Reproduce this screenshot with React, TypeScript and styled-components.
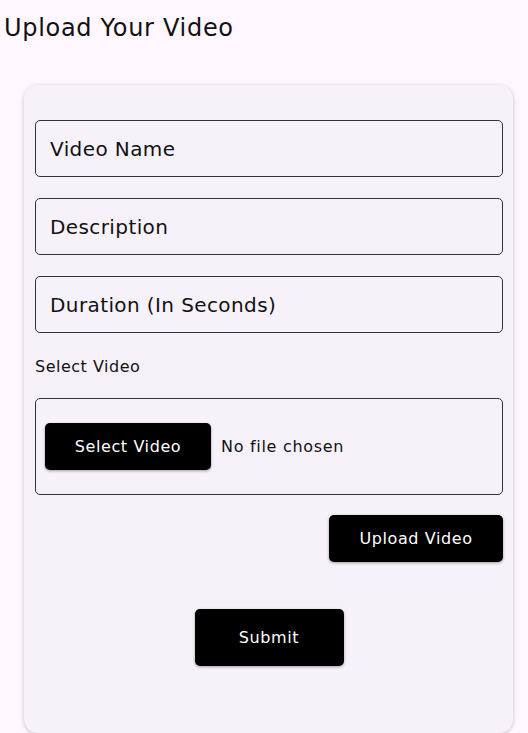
import React from "react";
import styled, { createGlobalStyle } from "styled-components";

const Global = createGlobalStyle`
  html, body { margin: 0; padding: 0; background: #fef7ff; }
  body { font-family: "DejaVu Sans", "Open Sans", sans-serif; color: #111; }
  * { box-sizing: border-box; }
`;

const Page = styled.div`
  width: 528px;
  min-height: 733px;
  display: flex;
  flex-direction: column;
  overflow: hidden;
`;

const Title = styled.h1`
  margin: 0;
  padding: 13px 4px 0;
  font-size: 24px;
  line-height: 30px;
  font-weight: 400;
  letter-spacing: 0.7px;
  color: #111;
`;

const Card = styled.div`
  margin: 42px 15px 0 24px;
  height: 648px;
  background: #f7f2fa;
  border-radius: 14px;
  box-shadow: 0 1px 4px rgba(0, 0, 0, 0.22);
  padding: 35px 10px 0 11px;
  display: flex;
  flex-direction: column;
`;

const Field = styled.div`
  height: 57px;
  border: 1px solid #333;
  border-radius: 5px;
  display: flex;
  align-items: center;
  padding: 0 14px;
  font-size: 20px;
  letter-spacing: 0.4px;
  color: #111;
  & + & { margin-top: 21px; }
`;

const Label = styled.div`
  margin-top: 22px;
  height: 22px;
  display: flex;
  align-items: center;
  font-size: 16px;
  letter-spacing: 0.5px;
  color: #111;
`;

const FileBox = styled.div`
  margin-top: 21px;
  height: 97px;
  border: 1px solid #333;
  border-radius: 5px;
  display: flex;
  align-items: center;
  padding: 0 9px;
  gap: 10px;
`;

const DarkButton = styled.button<{ $w: number; $h: number }>`
  width: ${(p) => p.$w}px;
  height: ${(p) => p.$h}px;
  background: #000;
  color: #fff;
  border: none;
  border-radius: 5px;
  font-family: inherit;
  font-size: 16px;
  letter-spacing: 0.6px;
  box-shadow: 0 1px 3px rgba(0, 0, 0, 0.35);
  display: flex;
  align-items: center;
  justify-content: center;
  padding: 0;
`;

const FileText = styled.span`
  font-size: 16px;
  letter-spacing: 0.7px;
  color: #111;
`;

const UploadRow = styled.div`
  margin-top: 20px;
  display: flex;
  justify-content: flex-end;
`;

const SubmitRow = styled.div`
  margin-top: 47px;
  display: flex;
  justify-content: center;
`;

export default function App() {
  return (
    <Page>
      <Global />
      <Title>Upload Your Video</Title>
      <Card>
        <Field>Video Name</Field>
        <Field>Description</Field>
        <Field>Duration (In Seconds)</Field>
        <Label>Select Video</Label>
        <FileBox>
          <DarkButton $w={166} $h={47}>Select Video</DarkButton>
          <FileText>No file chosen</FileText>
        </FileBox>
        <UploadRow>
          <DarkButton $w={174} $h={47}>Upload Video</DarkButton>
        </UploadRow>
        <SubmitRow>
          <DarkButton $w={149} $h={57}>Submit</DarkButton>
        </SubmitRow>
      </Card>
    </Page>
  );
}
